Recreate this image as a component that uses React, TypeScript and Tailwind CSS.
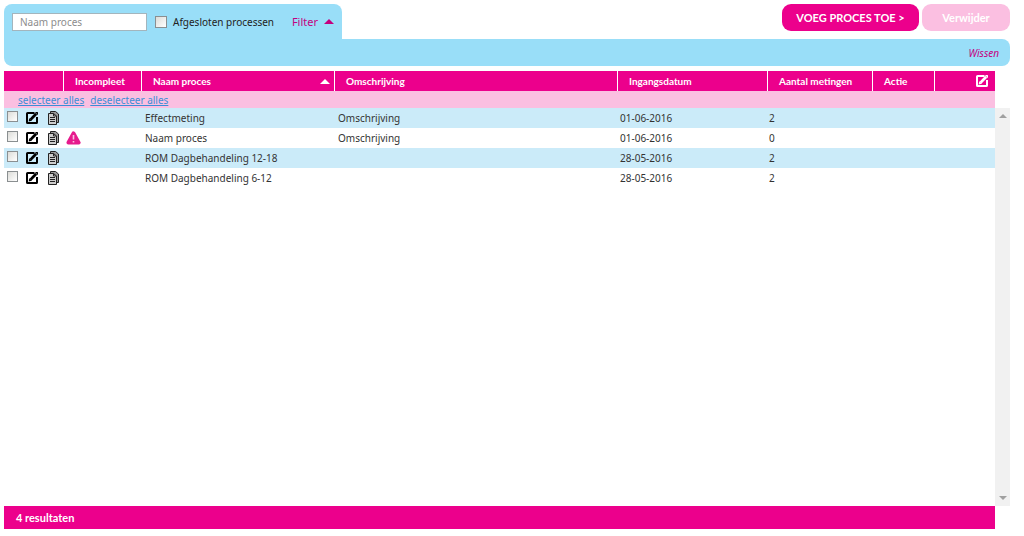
import { useState } from 'react';
import clsx from 'clsx';

interface Proces {
  id: number;
  naam: string;
  omschrijving: string;
  ingangsdatum: string;
  metingen: number;
  incompleet?: boolean;
}

const PROCESSEN: Proces[] = [
  { id: 1, naam: 'Effectmeting', omschrijving: 'Omschrijving', ingangsdatum: '01-06-2016', metingen: 2 },
  { id: 2, naam: 'Naam proces', omschrijving: 'Omschrijving', ingangsdatum: '01-06-2016', metingen: 0, incompleet: true },
  { id: 3, naam: 'ROM Dagbehandeling 12-18', omschrijving: '', ingangsdatum: '28-05-2016', metingen: 2 },
  { id: 4, naam: 'ROM Dagbehandeling 6-12', omschrijving: '', ingangsdatum: '28-05-2016', metingen: 2 },
];

const CHECKBOX =
  'block shrink-0 appearance-none border border-[#8a8f91] bg-linear-to-br from-[#dcdcd8] to-white checked:from-[#ec008c] checked:to-[#ec008c]';
const HEAD_CELL = 'border-r border-white pl-[11px] text-left font-[Lato,sans-serif] font-bold';

export default function App() {
  const [selected, setSelected] = useState<number[]>([]);

  const toggle = (id: number) =>
    setSelected((ids) => (ids.includes(id) ? ids.filter((other) => other !== id) : [...ids, id]));

  return (
    <div className="flex min-h-screen flex-col bg-white pt-1 pr-[14px] pb-[7px] pl-1 font-['Noto_Sans',sans-serif] text-[10px] leading-4 text-[#333]">
      <FilterBar />
      <div className="mt-[5px] flex flex-1">
        <div className="min-w-0 flex-1">
          <table className="w-full table-fixed border-separate border-spacing-0">
            <colgroup>
              <col className="w-[60px]" />
              <col className="w-[78px]" />
              <col className="w-[193px]" />
              <col />
              <col className="w-[150px]" />
              <col className="w-[105px]" />
              <col className="w-[62px]" />
              <col className="w-[60px]" />
            </colgroup>
            <thead>
              <tr className="h-5 bg-[#ec008c] text-white">
                <td className="border-r border-white" />
                <th className={HEAD_CELL}>Incompleet</th>
                <th className={HEAD_CELL}>
                  <div className="flex items-center justify-between pr-1">
                    Naam proces
                    <Triangle />
                  </div>
                </th>
                <th className={HEAD_CELL}>Omschrijving</th>
                <th className={HEAD_CELL}>Ingangsdatum</th>
                <th className={HEAD_CELL}>Aantal metingen</th>
                <th className={HEAD_CELL}>Actie</th>
                <td>
                  <button type="button" aria-label="Kolommen bewerken" className="ml-auto mr-[6px] block">
                    <EditIcon />
                  </button>
                </td>
              </tr>
              <tr className="h-[17px] bg-[#fbbfe1]">
                <td colSpan={8} className="pl-[14px] text-[#3b8fd6]">
                  <div className="flex gap-[6px]">
                    <a
                      href="#selecteer"
                      className="underline"
                      onClick={() => setSelected(PROCESSEN.map((proces) => proces.id))}
                    >
                      selecteer alles
                    </a>
                    <a href="#deselecteer" className="underline" onClick={() => setSelected([])}>
                      deselecteer alles
                    </a>
                  </div>
                </td>
              </tr>
            </thead>
            <tbody>
              {PROCESSEN.map((proces) => (
                <ProcesRow
                  key={proces.id}
                  proces={proces}
                  checked={selected.includes(proces.id)}
                  onToggle={() => toggle(proces.id)}
                />
              ))}
            </tbody>
          </table>
        </div>
        <div className="mt-[37px] flex w-[15px] flex-col items-center justify-between bg-[#f1f1f1] py-[6px] text-[#a0a0a0]">
          <button type="button" aria-label="Omhoog">
            <Triangle small />
          </button>
          <button type="button" aria-label="Omlaag" className="rotate-180">
            <Triangle small />
          </button>
        </div>
      </div>
      <footer className="mr-[15px] flex h-[23px] items-center bg-[#ec008c] pl-3 font-[Lato,sans-serif] text-[11px] font-bold text-white">
        4 resultaten
      </footer>
    </div>
  );
}

function FilterBar() {
  return (
    <header>
      <div className="flex items-start justify-between">
        <form className="flex h-[35px] w-[338px] items-center rounded-t-lg bg-[#99def8] pr-2 pl-2">
          <input
            type="text"
            aria-label="Naam proces"
            placeholder="Naam proces"
            className="h-[18px] w-[135px] border border-[#a3b5bd] bg-white px-[7px] outline-none placeholder:text-[#8c8c8c]"
          />
          <label className="ml-2 flex items-center gap-[6px] text-[#222]">
            <input type="checkbox" className={clsx(CHECKBOX, 'size-3')} />
            Afgesloten processen
          </label>
          <button type="button" className="ml-auto flex items-center gap-[6px] text-[11px] text-[#c4007f]">
            Filter
            <Triangle />
          </button>
        </form>
        <div className="flex gap-[3px] font-[Lato,sans-serif] text-[11px] font-bold text-white">
          <button type="button" className="h-[27px] w-[137px] rounded-[9px] bg-[#ec008c]">
            VOEG PROCES TOE &gt;
          </button>
          <button type="button" className="h-[27px] w-[88px] rounded-[9px] bg-[#fbbfe1]">
            Verwijder
          </button>
        </div>
      </div>
      <div className="flex h-[27px] items-center justify-end rounded-r-lg rounded-bl-lg bg-[#99def8] pr-[11px]">
        <button type="button" className="text-[#c4007f] italic">
          Wissen
        </button>
      </div>
    </header>
  );
}

interface ProcesRowProps {
  proces: Proces;
  checked: boolean;
  onToggle: () => void;
}

function ProcesRow({ proces, checked, onToggle }: ProcesRowProps) {
  return (
    <tr className="h-5 odd:bg-[#cbebf9]">
      <td>
        <div className="flex items-start pl-[3px] text-black">
          <input
            type="checkbox"
            aria-label={`Selecteer ${proces.naam}`}
            checked={checked}
            onChange={onToggle}
            className={clsx(CHECKBOX, 'size-[11px]')}
          />
          <button type="button" aria-label="Bewerken" className="ml-[7px]">
            <EditIcon />
          </button>
          <button type="button" aria-label="Kopiëren" className="ml-2">
            <CopyIcon />
          </button>
        </div>
      </td>
      <td className="pl-[2px]">{proces.incompleet && <WarningIcon />}</td>
      <td className="pl-[3px]">{proces.naam}</td>
      <td className="pl-[3px]">{proces.omschrijving}</td>
      <td className="pl-[2px]">{proces.ingangsdatum}</td>
      <td className="pl-[1px]">{proces.metingen}</td>
      <td />
      <td />
    </tr>
  );
}

function Triangle({ small = false }: { small?: boolean }) {
  return (
    <svg viewBox="0 0 10 5" className={clsx('block', small ? 'h-1 w-2' : 'h-[5px] w-[10px]')} fill="currentColor">
      <path d="M5 0 10 5H0z" />
    </svg>
  );
}

function EditIcon() {
  return (
    <svg viewBox="0 0 14 14" className="block size-[14px]" fill="none" stroke="currentColor">
      <path d="M9.5 2H2.6Q2 2 2 2.6v8.8q0 .6.6.6h8.8q.6 0 .6-.6V6" strokeWidth="2" />
      <path d="M5.6 8.6 11.2 2.8" strokeWidth="2.8" />
      <path d="M3.6 10.6 4.3 7.2 7 9.8zM10 1h2.4q.6 0 .6.6v2.6z" fill="currentColor" stroke="none" />
    </svg>
  );
}

function CopyIcon() {
  return (
    <svg viewBox="0 0 12 14" className="block h-[14px] w-3" fill="none" stroke="#222">
      <path d="M3.5 2.5v-2h5l3 2.5v8.5h-2" fill="#999" />
      <path d="M1.5 2.5h5l3 2.5v8.5h-8z" fill="#ccc" />
      <path d="M6.5 2.5V5h3M3 6.5h5M3 8.5h5M3 10.5h5" />
    </svg>
  );
}

function WarningIcon() {
  return (
    <svg viewBox="0 0 15 14" className="block h-[14px] w-[15px]" role="img" aria-label="Incompleet">
      <path d="M7.5 2.4 12.6 11.6H2.4z" fill="#e61b8d" stroke="#e61b8d" strokeWidth="4" strokeLinejoin="round" />
      <path d="M7.5 4v4.6M7.5 10v1.6" stroke="#fbbfe1" strokeWidth="1.6" />
    </svg>
  );
}
